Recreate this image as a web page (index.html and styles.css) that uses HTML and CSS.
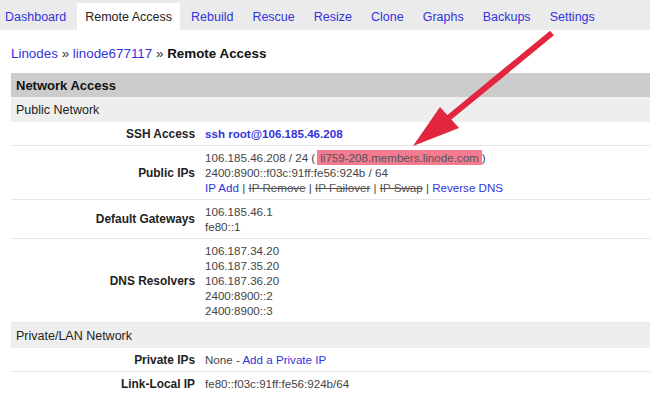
FILE: index.html
```html
<!DOCTYPE html>
<html>
<head>
<meta charset="utf-8">
<link rel="stylesheet" href="styles.css">
</head>
<body>
<nav class="tabs">
  <a class="tab" href="#">Dashboard</a>
  <a class="tab active" href="#">Remote Access</a>
  <a class="tab" href="#">Rebuild</a>
  <a class="tab" href="#">Rescue</a>
  <a class="tab" href="#">Resize</a>
  <a class="tab" href="#">Clone</a>
  <a class="tab" href="#">Graphs</a>
  <a class="tab" href="#">Backups</a>
  <a class="tab" href="#">Settings</a>
</nav>
<div class="crumbs"><a href="#">Linodes</a> » <a href="#">linode677117</a> » <b>Remote Access</b></div>
<table class="net">
  <tr class="head"><td colspan="2">Network Access</td></tr>
  <tr class="sub"><td colspan="2">Public Network</td></tr>
  <tr class="row"><th>SSH Access</th><td><a class="ssh" href="#">ssh root@106.185.46.208</a></td></tr>
  <tr class="row"><th>Public IPs</th><td>106.185.46.208 / 24 (<span class="hl">li759-208.members.linode.com</span>)<br>2400:8900::f03c:91ff:fe56:924b / 64<br><a href="#">IP Add</a> | <span class="strike">IP Remove</span> | <span class="strike">IP Failover</span> | <span class="strike">IP Swap</span> | <a href="#">Reverse DNS</a></td></tr>
  <tr class="row"><th>Default Gateways</th><td>106.185.46.1<br>fe80::1</td></tr>
  <tr class="row"><th>DNS Resolvers</th><td>106.187.34.20<br>106.187.35.20<br>106.187.36.20<br>2400:8900::2<br>2400:8900::3</td></tr>
  <tr class="sub"><td colspan="2">Private/LAN Network</td></tr>
  <tr class="row"><th>Private IPs</th><td>None - <a href="#">Add a Private IP</a></td></tr>
  <tr class="row last"><th>Link-Local IP</th><td>fe80::f03c:91ff:fe56:924b/64</td></tr>
</table>
<svg class="arrow" width="650" height="419" viewBox="0 0 650 419">
  <line x1="552" y1="33" x2="440" y2="125" stroke="#e2263f" stroke-width="6"/>
  <polygon points="413,146 440,107 459,128" fill="#e2263f"/>
</svg>
</body>
</html>
```
FILE: styles.css
```css
html, body {
  margin: 0;
  padding: 0;
  background: #fff;
  font-family: Arial, "Liberation Sans", sans-serif;
  color: #444;
}
a { color: #3333dd; text-decoration: none; }
.tabs {
  display: flex;
  height: 30px;
  background: #ebebeb;
  align-items: flex-end;
}
.tab {
  display: block;
  font-size: 12.5px;
  height: 27px;
  line-height: 29px;
  padding: 0 8px;
  margin-right: 3px;
}
.tab:first-child { padding-left: 5px; }
.tab.active { background: #fff; color: #222; }
.crumbs {
  font-size: 13.4px;
  margin: 16px 11px 0;
  height: 27px;
  color: #333;
}
.crumbs b { color: #111; }
.net {
  margin-left: 11px;
  width: 639px;
  border-collapse: collapse;
  font-size: 11.6px;
}
.net td, .net th { padding: 0 5px; }
.head td {
  background: #cccccc;
  font-weight: bold;
  font-size: 13px;
  color: #111;
  height: 24px;
}
.sub td {
  background: #eeeeee;
  font-size: 12.5px;
  color: #222;
  height: 25px;
}
.row th {
  width: 179px;
  text-align: right;
  font-size: 11.9px;
  color: #222;
  vertical-align: middle;
}
.row td {
  line-height: 15px;
  padding-top: 4px;
  padding-bottom: 4px;
}
.row th, .row td { border-bottom: 1px solid #e6e6e6; }
.row.last th, .row.last td { border-bottom: none; }
.ssh { font-weight: bold; font-size: 11.6px; }
.hl { background: #f47b90; padding: 1px 3px; margin-left: 2px; color: #555; }
.strike { text-decoration: line-through; color: #555; }
.arrow { position: absolute; left: 0; top: 0; pointer-events: none; }
```
